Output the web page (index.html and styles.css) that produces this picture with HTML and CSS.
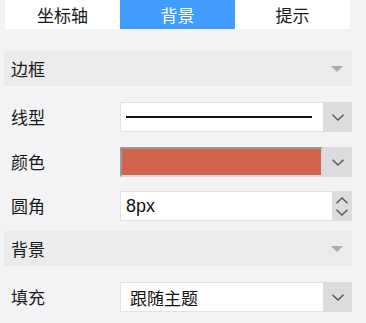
FILE: index.html
```html
<!DOCTYPE html>
<html lang="zh">
<head>
<meta charset="utf-8">
<link rel="stylesheet" href="styles.css">
</head>
<body>
<div class="panel">
  <div class="tabs">
    <div class="tab">坐标轴</div>
    <div class="tab active">背景</div>
    <div class="tab">提示</div>
  </div>

  <div class="section first">
    <span>边框</span>
    <svg class="tri" width="12" height="6" viewBox="0 0 12 6"><path d="M0 0H12L6 6Z" fill="#acacac"/></svg>
  </div>

  <div class="row r1">
    <div class="label">线型</div>
    <div class="select">
      <div class="field"><div class="line"></div></div>
      <div class="btn"><svg width="12" height="7" viewBox="0 0 12 7"><path d="M0.5 0.8L6 6L11.5 0.8" fill="none" stroke="#555" stroke-width="1.4"/></svg></div>
    </div>
  </div>

  <div class="row r2">
    <div class="label">颜色</div>
    <div class="select">
      <div class="field swatch-wrap"><div class="swatch"></div></div>
      <div class="btn"><svg width="12" height="7" viewBox="0 0 12 7"><path d="M0.5 0.8L6 6L11.5 0.8" fill="none" stroke="#555" stroke-width="1.4"/></svg></div>
    </div>
  </div>

  <div class="row r3">
    <div class="label">圆角</div>
    <div class="select">
      <div class="field text">8px</div>
      <div class="spin">
        <svg width="12" height="7" viewBox="0 0 12 7"><path d="M0.5 6.2L6 1L11.5 6.2" fill="none" stroke="#555" stroke-width="1.4"/></svg>
        <svg width="12" height="7" viewBox="0 0 12 7"><path d="M0.5 0.8L6 6L11.5 0.8" fill="none" stroke="#555" stroke-width="1.4"/></svg>
      </div>
    </div>
  </div>

  <div class="section second">
    <span>背景</span>
    <svg class="tri" width="12" height="6" viewBox="0 0 12 6"><path d="M0 0H12L6 6Z" fill="#acacac"/></svg>
  </div>

  <div class="row r4">
    <div class="label">填充</div>
    <div class="select">
      <div class="field text fill">跟随主题</div>
      <div class="btn"><svg width="12" height="7" viewBox="0 0 12 7"><path d="M0.5 0.8L6 6L11.5 0.8" fill="none" stroke="#555" stroke-width="1.4"/></svg></div>
    </div>
  </div>
</div>
</body>
</html>
```

FILE: styles.css
```css
html, body {
  margin: 0;
  padding: 0;
  background: #f3f3f5;
}
body {
  font-family: "Noto Sans CJK SC", "Noto Sans", sans-serif;
  font-size: 17px;
  color: #1a1a1a;
}
.panel {
  width: 348px;
  margin-left: 4px;
}
.tabs {
  display: flex;
  margin: 0 2px 0 1px;
  height: 29px;
  background: #fff;
}
.tab {
  flex: 1;
  display: flex;
  align-items: center;
  justify-content: center;
  line-height: 29px;
  color: #1a1a1a;
}
.tab.active {
  background: #409dfd;
  color: #fff;
}
.section {
  height: 35px;
  background: #ebebeb;
  display: flex;
  align-items: center;
  justify-content: space-between;
  padding: 0 9px 0 7px;
}
.section.first { margin-top: 22px; }
.section.second { margin-top: 10px; }
.tri { display: block; margin-top: 1px; }
.row {
  display: flex;
  align-items: center;
}
.r1 { margin-top: 16px; }
.r2 { margin-top: 15px; }
.r3 { margin-top: 14px; }
.r4 { margin-top: 16px; }
.label {
  width: 109px;
  padding-left: 7px;
  line-height: 30px;
}
.select {
  width: 232px;
  height: 30px;
  display: flex;
}
.field {
  flex: 1;
  background: #fff;
  border: 1px solid #e2e2e4;
  border-right: none;
  box-sizing: border-box;
  display: flex;
  align-items: center;
}
.line {
  margin-left: 5px;
  width: 186px;
  height: 2px;
  background: #111;
}
.swatch-wrap {
  border: none;
  background: #d4d4d6;
  padding: 0;
}
.swatch {
  width: 100%;
  height: 100%;
  box-sizing: border-box;
  background: #cf634b;
  border-top: 2px solid #9a9a9a;
  border-left: 2px solid #9a9a9a;
  border-bottom: 2px solid #d8d8da;
  border-right: 2px solid #d8d8da;
}
.text {
  padding-left: 5px;
  color: #111;
  font-size: 18px;
  font-family: "Liberation Sans", "Noto Sans CJK SC", sans-serif;
}
.text.fill {
  padding-left: 9px;
  font-size: 17px;
  font-family: "Noto Sans CJK SC", sans-serif;
}
.btn {
  width: 29px;
  background: #dcdcde;
  display: flex;
  align-items: center;
  justify-content: center;
}
.spin {
  width: 20px;
  background: #dcdcde;
  display: flex;
  flex-direction: column;
  align-items: center;
  justify-content: center;
  gap: 5px;
}
.spin svg, .btn svg { display: block; }
```
